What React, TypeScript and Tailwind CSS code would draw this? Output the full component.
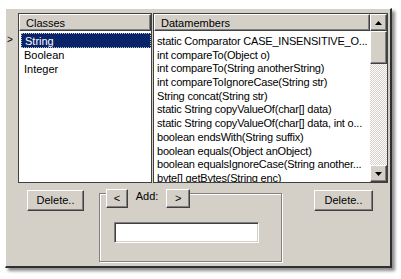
import { ReactNode } from 'react';

const classes = ['String', 'Boolean', 'Integer'];

const members = [
  'static Comparator CASE_INSENSITIVE_O...',
  'int compareTo(Object o)',
  'int compareTo(String anotherString)',
  'int compareToIgnoreCase(String str)',
  'String concat(String str)',
  'static String copyValueOf(char[] data)',
  'static String copyValueOf(char[] data, int o...',
  'boolean endsWith(String suffix)',
  'boolean equals(Object anObject)',
  'boolean equalsIgnoreCase(String another...',
  'byte[] getBytes(String enc)',
];

// classic raised 3d edge
const raised =
  'border border-t-white border-l-white border-r-[#404040] border-b-[#404040] bg-[#d4d0c8] shadow-[inset_-1px_-1px_#808080]';

function Button({ children, className = '' }: { children: ReactNode; className?: string }) {
  return (
    <div className={`${raised} flex items-center justify-center text-black ${className}`}>{children}</div>
  );
}

function Header({ title }: { title: string }) {
  return (
    <div className={`${raised} h-[17px] shrink-0 pl-[6px] pt-[1px] leading-[15px]`}>{title}</div>
  );
}

function Arrow({ up }: { up?: boolean }) {
  return (
    <svg width="7" height="4" viewBox="0 0 7 4">
      <path d={up ? 'M3.5 0 L7 4 L0 4 Z' : 'M0 0 L7 0 L3.5 4 Z'} fill="#000" />
    </svg>
  );
}

export default function App() {
  return (
    <div className="min-h-[279px] bg-white pl-[5px] pt-[8px] font-['Liberation_Sans',Arial,sans-serif] text-[11px] text-black">
      <div className="h-[260px] w-[387px] border-l border-t border-l-white border-t-white border-r-2 border-b-2 border-r-[#303030] border-b-[#303030] bg-[#d4d0c8] pl-[12px] pt-[4px] shadow-[3px_3px_3px_rgba(0,0,0,0.45)]">
        <div className="relative flex gap-[1px]">
          <span className="absolute left-[-11px] top-[22px] text-[10px] leading-none">&gt;</span>
          {/* Classes */}
          <div className="flex h-[170px] w-[134px] flex-col border border-[#404040] bg-white">
            <Header title="Classes" />
            <div className="pl-[2px] pt-[2px]">
              {classes.map((c, i) => (
                <div
                  key={c}
                  className={`h-[14.5px] pl-[3px] leading-[14.5px] ${
                    i === 0 ? 'border border-dotted border-[#c0c0c0] bg-[#0a246a] pl-[2px] leading-[12.5px] text-white' : ''
                  }`}
                >
                  {c}
                </div>
              ))}
            </div>
          </div>
          {/* Datamembers */}
          <div className="flex h-[170px] w-[235px] border border-[#404040] bg-white">
            <div className="flex min-w-0 flex-1 flex-col overflow-hidden">
              <Header title="Datamembers" />
              <div className="overflow-hidden pl-[3px] pt-[4px] tracking-[-0.2px]">
                {members.map((m) => (
                  <div key={m} className="h-[13.7px] whitespace-nowrap leading-[13.7px]">
                    {m}
                  </div>
                ))}
              </div>
            </div>
            <div className="flex w-[17px] shrink-0 flex-col">
              <Button className="h-[17px] shrink-0">
                <Arrow up />
              </Button>
              <Button className="h-[33px] shrink-0" />
              <div className="flex-1 bg-[repeating-conic-gradient(#d4d0c8_0%_25%,#ffffff_0%_50%)] bg-[length:2px_2px]" />
              <Button className="h-[17px] shrink-0">
                <Arrow />
              </Button>
            </div>
          </div>
        </div>

        <div className="flex items-start pt-[7px]">
          <Button className="ml-[9px] h-[21px] w-[57px]">Delete..</Button>
          {/* Add group */}
          <div className="ml-[15px] mt-[3px] h-[69px] w-[183px] border border-[#808080] shadow-[inset_1px_1px_#ffffff,1px_1px_#ffffff]">
            <div className="ml-[6px] -mt-[5px] flex w-[84px] items-start bg-[#d4d0c8]">
              <Button className="h-[19px] w-[22px]">&lt;</Button>
              <span className="ml-[8px] mr-[8px] leading-[14px]">Add:</span>
              <Button className="h-[19px] w-[24px]">&gt;</Button>
            </div>
            <div className="ml-[14px] mt-[14px] h-[21px] w-[145px] border border-t-[#808080] border-l-[#808080] border-r-white border-b-white bg-white shadow-[inset_1px_1px_#404040,inset_-1px_-1px_#d4d0c8]" />
          </div>
          <Button className="ml-[32px] h-[21px] w-[59px]">Delete..</Button>
        </div>
      </div>
    </div>
  );
}
